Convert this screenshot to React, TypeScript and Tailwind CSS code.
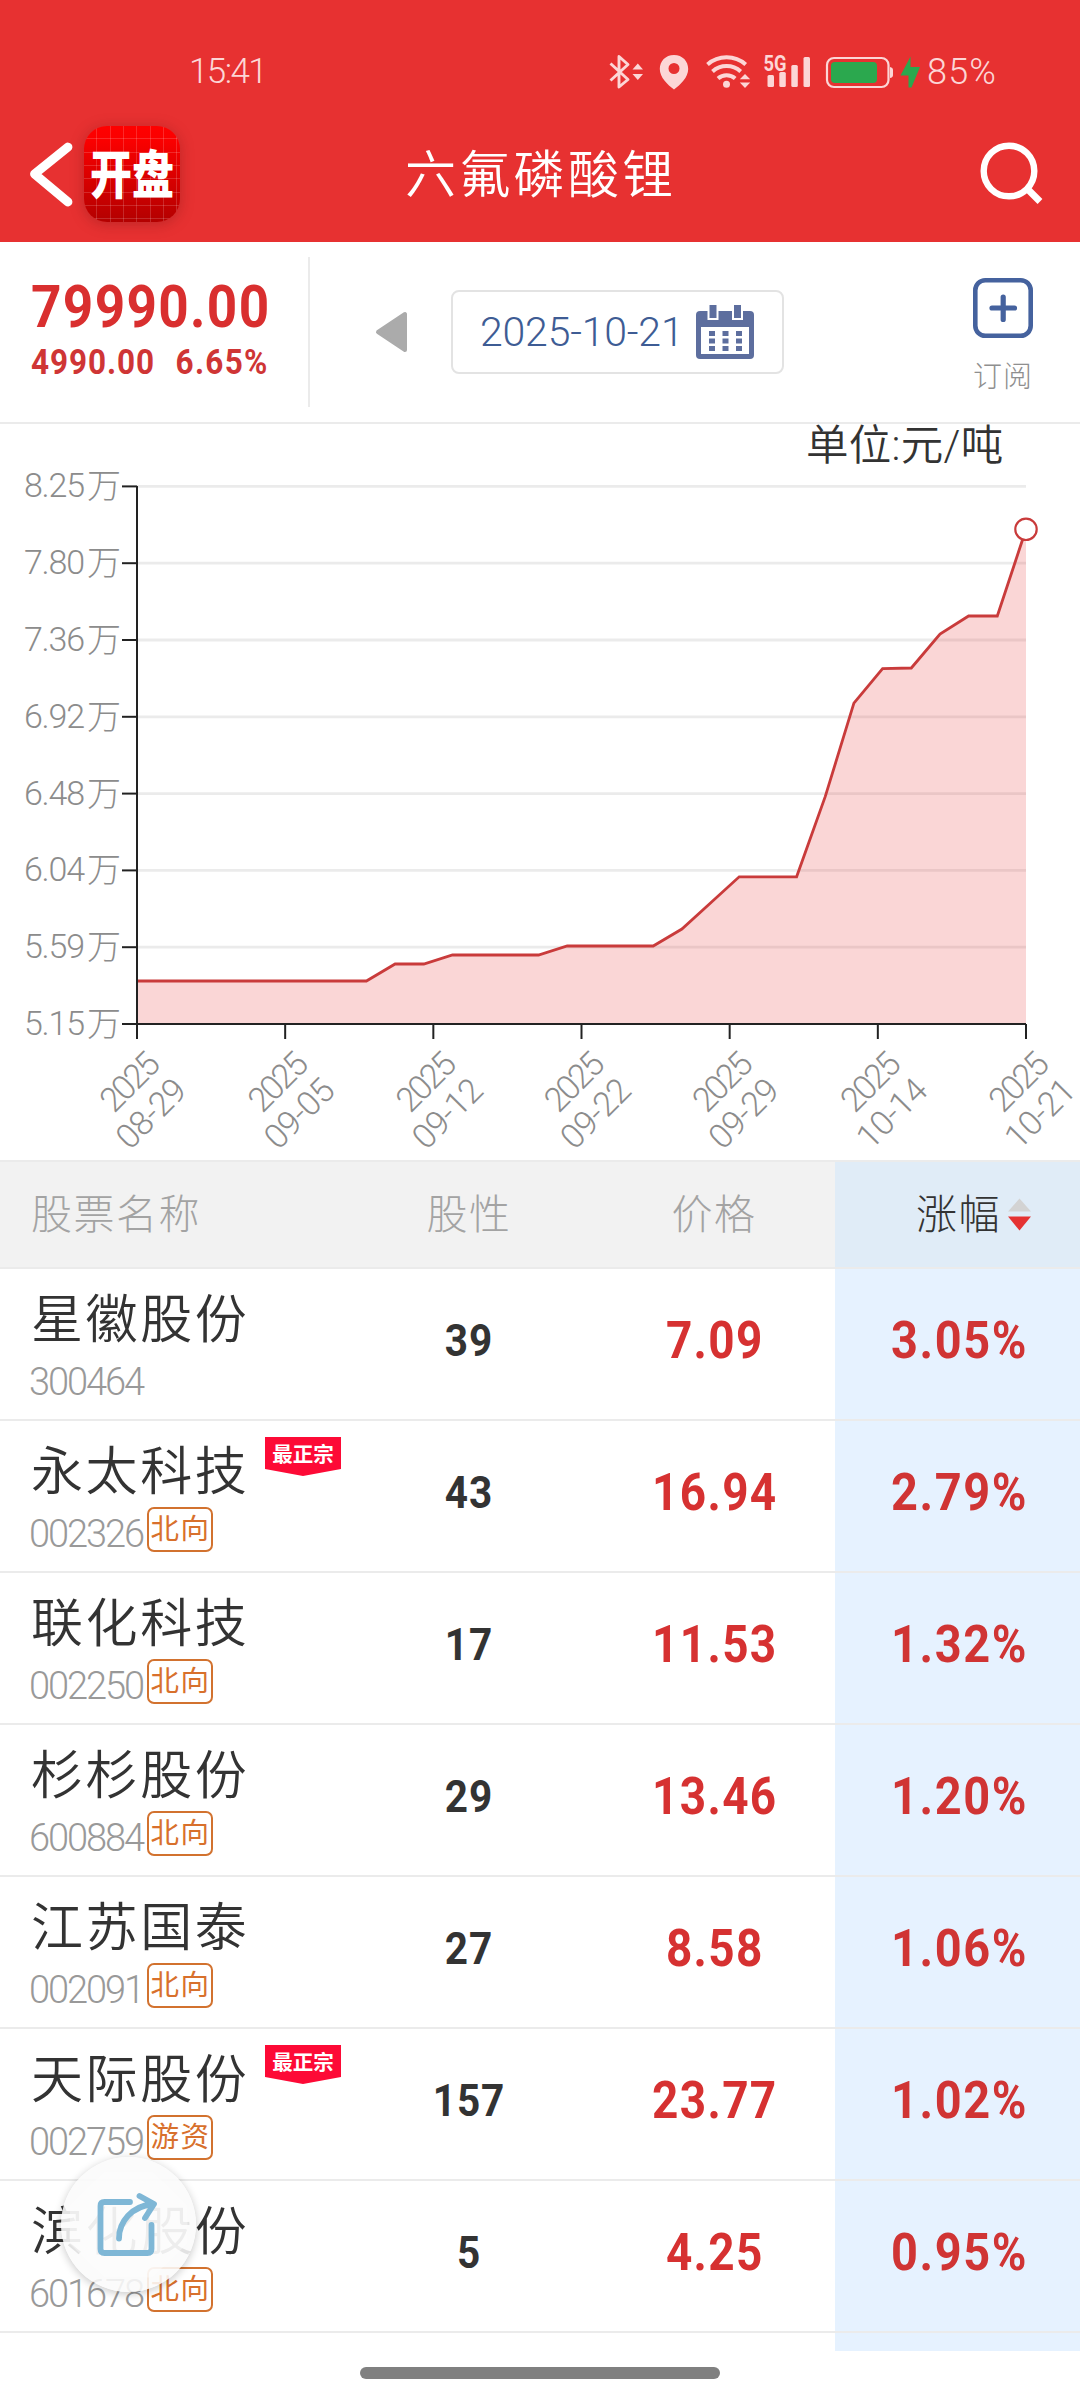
const CJK = "font-['Roboto','Noto_Sans_CJK_SC',sans-serif]";

const stocks = [
  { name: '星徽股份', code: '300464', tag: '', top: false, score: '39', price: '7.09', change: '3.05%' },
  { name: '永太科技', code: '002326', tag: '北向', top: true, score: '43', price: '16.94', change: '2.79%' },
  { name: '联化科技', code: '002250', tag: '北向', top: false, score: '17', price: '11.53', change: '1.32%' },
  { name: '杉杉股份', code: '600884', tag: '北向', top: false, score: '29', price: '13.46', change: '1.20%' },
  { name: '江苏国泰', code: '002091', tag: '北向', top: false, score: '27', price: '8.58', change: '1.06%' },
  { name: '天际股份', code: '002759', tag: '游资', top: true, score: '157', price: '23.77', change: '1.02%' },
  { name: '滨化股份', code: '601678', tag: '北向', top: false, score: '5', price: '4.25', change: '0.95%' },
];

function StatusBar() {
  return (
    <div className="flex h-[104px] items-start pl-[189px] pr-[82px] pt-[52px] text-[#fcd6d6]">
      <span className="mt-[2px] text-[35px] font-light leading-[36px] tracking-[-1.600px]">15:41</span>
      <svg className="ml-auto h-[40px] w-[314px]" viewBox="608 51 314 40" fill="none">
        <path d="M610.5 62.5 L628 78.5 L619 86 V55.5 L628 63.5 L610.5 79.5" stroke="#fcd6d6" strokeWidth="2.9" strokeLinejoin="round" />
        <path d="M632.5 68.5 L637.8 62.5 L643 68.5Z M632.5 73 H643 L637.8 79Z" fill="#fcd6d6" />
        <path fillRule="evenodd" d="M674 54 C665.500 54 659.800 60.300 659.800 68 C659.800 76.500 667.500 83.500 674 88.500 C680.500 83.500 688.200 76.500 688.200 68 C688.200 60.300 682.500 54 674 54Z M674 62 a5.500 5.500 0 1 1 0 11 a5.500 5.500 0 1 1 0 -11Z" fill="#fcd6d6" />
        <g stroke="#fcd6d6" strokeWidth="4">
          <path d="M707.500 63.500 A29 29 0 0 1 745.700 63.500" />
          <path d="M712.500 70.500 A21 21 0 0 1 740.700 70.500" />
          <path d="M718 77.500 A13 13 0 0 1 735.200 77.500" />
        </g>
        <circle cx="726.500" cy="83.300" r="3.500" fill="#fcd6d6" />
        <path d="M739.800 78.200 L745 73 L750.200 78.200Z M739.800 81.500 H750.200 L745 87Z" fill="#fcd6d6" />
        <text x="763.500" y="69.500" fill="#fcd6d6" fontSize="21.500" fontWeight="700" textLength="23" lengthAdjust="spacingAndGlyphs" fontFamily="Roboto, sans-serif">5G</text>
        <g fill="#fcd6d6">
          <rect x="767.500" y="74" width="6.500" height="12" rx="1.500" />
          <rect x="779.300" y="71" width="6.500" height="15" rx="1.500" />
          <rect x="791.300" y="64" width="6.500" height="22" rx="1.500" />
          <rect x="803.500" y="56" width="6.500" height="30" rx="1.500" />
        </g>
        <rect x="827" y="57" width="61.500" height="29" rx="7" stroke="#fcd6d6" strokeWidth="2.200" />
        <rect x="831" y="61" width="46" height="21" rx="4" fill="#2ba84e" />
        <path d="M890 66 q3 0.500 3 3 v5 q0 2.500 -3 3Z" fill="#fcd6d6" />
        <path d="M910.500 55.500 L900.500 74.500 H908.500 V86.500 H911.500 L920 66 H910.500Z" fill="#2ba84e" />
      </svg>
      <span className="ml-[5px] mt-[2px] w-[71px] whitespace-nowrap text-[36px] font-light leading-[36px] tracking-[1.200px]">85%</span>
    </div>
  );
}

function TitleBar() {
  return (
    <div className="flex h-[138px] items-start">
      <svg className="ml-[26px] mt-[38px] h-[68px] w-[50px] shrink-0" viewBox="26 142 50 68" fill="none">
        <path d="M68 147 L34.500 174 L68 202" stroke="#fff" strokeWidth="8.800" strokeLinecap="round" strokeLinejoin="round" />
      </svg>
      <div className="ml-[8px] mt-[22px] h-[96px] w-[96px] shrink-0 overflow-visible rounded-[23px] bg-[linear-gradient(180deg,#ff0000_0%,#fa0000_15%,#b30000_100%)] shadow-[0_2px_14px_rgba(110,20,20,0.35)]">
        <div className="flex h-full w-full items-center justify-center rounded-[23px] bg-[repeating-linear-gradient(90deg,transparent_0px,transparent_12.300px,rgba(255,255,255,0.160)_12.300px,rgba(255,255,255,0.160)_13.300px),repeating-linear-gradient(180deg,transparent_0px,transparent_12.300px,rgba(255,255,255,0.160)_12.300px,rgba(255,255,255,0.160)_13.300px)]">
          <span className="mt-[3px] scale-y-[1.25] whitespace-nowrap text-[42px] font-black leading-none text-white">开盘</span>
        </div>
      </div>
      <h1 className="ml-[225px] mt-[42px] w-[274px] whitespace-nowrap text-[51px] font-[350] leading-[60px] tracking-[3.300px] text-white">六氟磷酸锂</h1>
      <svg className="ml-[297px] mt-[34px] h-[70px] w-[70px] shrink-0" viewBox="976 138 70 70" fill="none" stroke="#fff">
        <circle cx="1009" cy="171" r="25.300" strokeWidth="6.400" />
        <path d="M1027.500 189 L1040 201.500" strokeWidth="6.800" />
      </svg>
    </div>
  );
}

function Quote() {
  return (
    <section className="flex h-[182px] items-start border-b-2 border-[#ebebeb] bg-white">
      <div className="mt-[15px] h-[150px] w-[310px] border-r-2 border-[#ebebeb] pl-[31px] text-[#d92f2f]">
        <div className="mt-[21px] w-[300px] origin-left scale-x-90 text-[59px] font-bold leading-[58px] tracking-[1.500px]">79990.00</div>
        <div className="mt-[9px] flex w-[300px] origin-left scale-x-90 text-[35px] font-bold leading-[36px] tracking-[1px] text-[#cf3535]">
          <span>4990.00</span>
          <span className="ml-[23px] tracking-[1.400px]">6.65%</span>
        </div>
      </div>
      <svg className="ml-[64px] mt-[68px] h-[44px] w-[36px]" viewBox="0 0 36 44">
        <path d="M4 22 L31 4 V40Z" fill="#ababab" stroke="#ababab" strokeWidth="4" strokeLinejoin="round" />
      </svg>
      <div className="ml-[41px] mt-[48px] flex h-[84px] w-[333px] items-center rounded-[8px] border-2 border-[#e3e3e3]">
        <span className="ml-[27px] w-[202px] whitespace-nowrap text-[41px] font-light leading-none tracking-[-0.200px] text-[#3e5c94]">2025-10-21</span>
        <svg className="ml-[14px] h-[56px] w-[58px]" viewBox="0 0 58 56">
          <rect x="0" y="7" width="58" height="48" rx="4" fill="#5d6e9e" />
          <rect x="5" y="23" width="48" height="27" fill="#fff" />
          <path d="M12.500 0 h9 v15 h-9Z M37 0 h9 v15 h-9Z" fill="#5d6e9e" stroke="#fff" strokeWidth="2" />
          <path d="M13 27 h6 v5 h-6Z M26.500 27 h6 v5 h-6Z M40 27 h6 v5 h-6Z M13 34.500 h6 v5 h-6Z M26.500 34.500 h6 v5 h-6Z M40 34.500 h6 v5 h-6Z M13 42 h6 v5 h-6Z M26.500 42 h6 v5 h-6Z M40 42 h6 v5 h-6Z" fill="#5d6e9e" />
        </svg>
      </div>
      <div className="ml-[188px] mt-[36px] flex w-[62px] flex-col items-center">
        <svg className="h-[60px] w-[60px]" viewBox="0 0 60 60" fill="none" stroke="#45629e" strokeLinecap="round">
          <rect x="2.300" y="2.300" width="55.400" height="55.400" rx="10" strokeWidth="4.600" />
          <path d="M19 30 H41.500 M30.200 19 V41.500" strokeWidth="5.200" />
        </svg>
        <span className="mt-[24px] whitespace-nowrap text-[29px] font-light leading-[30px] tracking-[1px] text-[#8f8f8f]">订阅</span>
      </div>
    </section>
  );
}

const LEFT = 137;
const RIGHT = 1026;
const BOTTOM = 1024;
const yLabels = ['8.25', '7.80', '7.36', '6.92', '6.48', '6.04', '5.59', '5.15'];
const xLabels = ['08-29', '09-05', '09-12', '09-22', '09-29', '10-14', '10-21'];
const series = [
  981, 981, 981, 981, 981, 981, 981, 981, 981, 964, 964, 955, 955, 955, 955, 946, 946, 946, 946, 929, 903, 876.8,
  876.8, 876.8, 796.4, 703.2, 668.6, 668, 634, 616, 616, 529.3,
];

function Chart() {
  const step = (RIGHT - LEFT) / (series.length - 1);
  const line = series.map((y, i) => `${(LEFT + i * step).toFixed(1)},${y}`).join(' ');
  return (
    <section className="relative h-[736px] bg-white">
      <svg className="h-[736px] w-[1080px]" viewBox="0 424 1080 736" fontFamily="Roboto, 'Noto Sans CJK SC', sans-serif" fontWeight="300">
        {yLabels.map((t, i) => {
          const y = 486.4 + i * 76.8;
          return (
            <g key={t}>
              {i < 7 && <path d={`M${LEFT} ${y} H${RIGHT}`} stroke="#ebebeb" strokeWidth="2.800" />}
              <path d={`M122 ${y} H${LEFT}`} stroke="#222" strokeWidth="2" />
              <text x="24" y={y + 11} fontSize="34" fill="#8c8c8c" textLength="61">{t}</text>
              <text x="87" y={y + 12} fontSize="34" fill="#8c8c8c">万</text>
            </g>
          );
        })}
        <polygon points={`${LEFT},${BOTTOM} ${line} ${RIGHT},${BOTTOM}`} fill="rgba(230,50,50,0.200)" />
        <polyline points={line} fill="none" stroke="#c93b3b" strokeWidth="2.800" />
        <path d={`M${LEFT} 486 V${BOTTOM} M${LEFT} ${BOTTOM} H${RIGHT}`} stroke="#222" strokeWidth="2" />
        <circle cx={RIGHT} cy="529.300" r="10.700" fill="#fff" stroke="#c93b3b" strokeWidth="2.200" />
        {xLabels.map((t, i) => {
          const x = LEFT + (i * (RIGHT - LEFT)) / 6;
          return (
            <g key={t} fill="#8c8c8c" fontSize="34">
              <path d={`M${x} ${BOTTOM} V1039`} stroke="#222" strokeWidth="2" />
              <text transform={`translate(${x - 23} 1114) rotate(-45)`} textLength="68">2025</text>
              <text transform={`translate(${x - 7} 1151) rotate(-45)`} textLength="83">{t}</text>
            </g>
          );
        })}
      </svg>
      <span className="absolute left-[806px] top-[-3px] whitespace-nowrap text-[42.500px] font-[350] leading-[50px] tracking-[0.300px] text-[#333]">单位:元/吨</span>
    </section>
  );
}

function Ribbon() {
  return (
    <div className="absolute left-[265px] top-[16px] flex h-[39px] w-[76px] justify-center bg-[#fd0a36] pt-[7px] [clip-path:polygon(0_0,100%_0,100%_82%,50%_100%,0_82%)]">
      <span className="whitespace-nowrap text-[20.500px] font-bold leading-[22px] text-white">最正宗</span>
    </div>
  );
}

function StockTable() {
  return (
    <section>
      <div className="grid h-[109px] grid-cols-[345px_246px_244px_245px] border-y-2 border-[#ebebeb] bg-[#f2f2f2] text-[41px] font-light leading-[50px] tracking-[1.500px] text-[#a3a3a3]">
        <span className="pl-[31px] pt-[28px]">股票名称</span>
        <span className="pl-[2px] pt-[28px] text-center">股性</span>
        <span className="pl-[2px] pt-[28px] text-center">价格</span>
        <span className="flex bg-[#e0ecf7] pl-[81px] pt-[28px] text-[#333]">
          涨幅
          <svg className="ml-[7px] mt-[8px] h-[34px] w-[24px]" viewBox="0 0 24 34">
            <path d="M11.500 0.500 L23 13.500 H0Z" fill="#d3d3d3" />
            <path d="M0 18.500 H23 L11.500 32.500Z" fill="#e53232" />
          </svg>
        </span>
      </div>
      {stocks.map((s) => (
        <div key={s.code} className="relative grid h-[152px] grid-cols-[345px_246px_244px_245px] border-b-2 border-[#ebebeb] bg-white">
          <div className="pl-[31px]">
            <div className="mt-[21px] whitespace-nowrap text-[52px] font-[350] leading-[62px] tracking-[2.600px] text-[#333]">{s.name}</div>
            <div className="flex items-start">
              <span className="ml-[-2px] mt-[10px] w-[118px] whitespace-nowrap text-[38px] font-light leading-[40px] tracking-[-2.100px] text-[#999]">{s.code}</span>
              {s.tag && (
                <span className="mt-[3px] flex h-[45px] w-[66px] items-center justify-center rounded-[7px] border-2 border-[#d2722f] pl-[1px] pt-[2px] text-[28.500px] leading-none tracking-[1.500px] text-[#d8702c]">{s.tag}</span>
              )}
            </div>
          </div>
          {s.top && <Ribbon />}
          <div className="origin-center scale-x-90 pl-[2px] pt-[46px] text-center text-[45px] font-bold leading-[52px] tracking-[0.900px] text-[#333]">{s.score}</div>
          <div className="origin-center scale-x-90 pl-[4px] pt-[46px] text-center text-[51px] font-bold leading-[52px] tracking-[1.500px] text-[#d63131]">{s.price}</div>
          <div className="bg-[#e6f2ff] pl-[4px] pt-[46px] text-center text-[51px] font-bold leading-[52px] text-[#d03434]">
            <div className="origin-center scale-x-[0.920] tracking-[1.700px]">{s.change}</div>
          </div>
        </div>
      ))}
      <div className="grid h-[18px] grid-cols-[835px_245px]">
        <span />
        <span className="bg-[#e6f2ff]" />
      </div>
    </section>
  );
}

function ShareButton() {
  return (
    <button className="absolute left-[61px] top-[2157px] flex h-[135px] w-[135px] items-center justify-center rounded-full bg-[#fbfbfb]/88 shadow-[0_2px_8px_rgba(0,0,0,0.220)]">
      <span className="flex h-[106px] w-[118px] items-center justify-center bg-white/40 [clip-path:polygon(30%_0,70%_0,100%_32%,100%_68%,70%_100%,30%_100%,0_68%,0_32%)]">
        <svg className="h-[68px] w-[64px]" viewBox="97.500 2191 64 68" fill="none" stroke="#7fb7d6" strokeWidth="5.800" strokeLinecap="round" strokeLinejoin="round">
          <path d="M130.500 2202 H105 Q101 2202 101 2206 V2249 Q101 2253 105 2253 H148 Q152 2253 152 2249 V2225" />
          <path d="M119.500 2238.500 C119.500 2222 132 2206 154 2204 M140 2196 L154.500 2204 L145.500 2218" />
        </svg>
      </span>
    </button>
  );
}

export default function App() {
  return (
    <main className={`relative h-[2400px] w-[1080px] overflow-hidden bg-white ${CJK}`}>
      <header className="h-[242px] bg-[#e73131]">
        <StatusBar />
        <TitleBar />
      </header>
      <Quote />
      <Chart />
      <StockTable />
      <div className="mx-auto mt-[16px] h-[12px] w-[360px] rounded-full bg-[#808080]" />
      <ShareButton />
    </main>
  );
}
